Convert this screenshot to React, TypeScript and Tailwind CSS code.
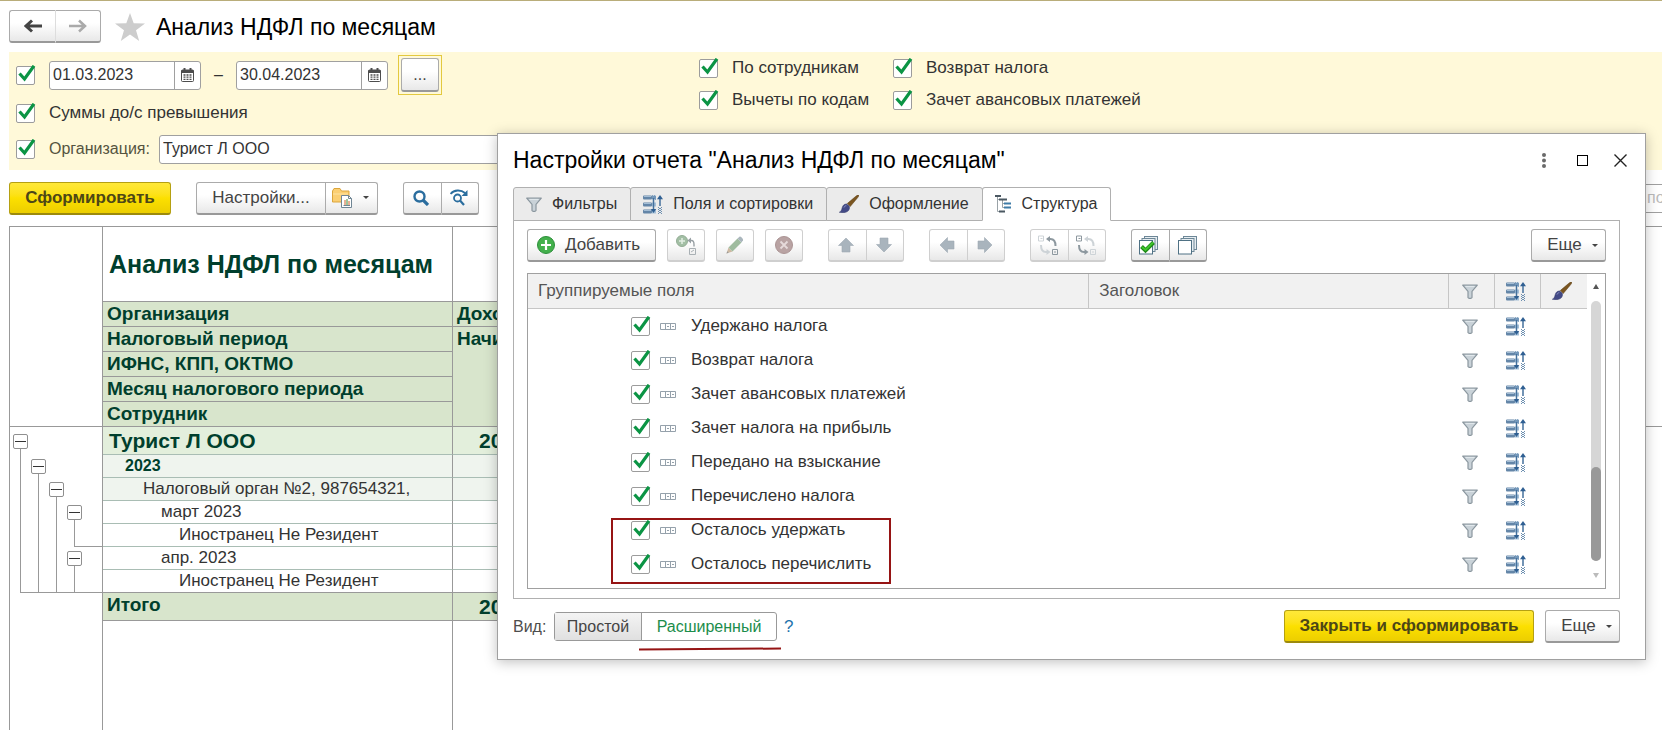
import { useState } from 'react';
import type { ReactNode } from 'react';
import clsx from 'clsx';

const FIELDS = [
  'Удержано налога',
  'Возврат налога',
  'Зачет авансовых платежей',
  'Зачет налога на прибыль',
  'Передано на взыскание',
  'Перечислено налога',
  'Осталось удержать',
  'Осталось перечислить',
];

const HEADERS = ['Налоговый период', 'ИФНС, КПП, ОКТМО', 'Месяц налогового периода', 'Сотрудник'];

interface ReportRow {
  text: string;
  level: number;
  closeFrom?: number;
  cell: string;
  value?: string;
}

const ROWS: ReportRow[] = [
  { text: 'Турист Л ООО', level: 0, cell: 'h-7 bg-[#e3efdc] pl-1.5 text-[21px] font-bold text-[#003f2d]', value: '20' },
  { text: '2023', level: 1, cell: 'h-[23px] bg-[#eff4ee] pl-[22px] text-base font-bold text-[#003f2d]' },
  { text: 'Налоговый орган №2, 987654321,', level: 2, cell: 'h-[23px] bg-[#eff4ee] pl-10 text-[17px] text-[#333]' },
  { text: 'март 2023', level: 3, cell: 'h-[23px] pl-[58px] text-[17px] text-[#333]' },
  { text: 'Иностранец Не Резидент', level: 4, closeFrom: 3, cell: 'h-[23px] pl-[76px] text-[17px] text-[#333]' },
  { text: 'апр. 2023', level: 3, cell: 'h-[23px] pl-[58px] text-[17px] text-[#333]' },
  { text: 'Иностранец Не Резидент', level: 4, closeFrom: 0, cell: 'h-[23px] pl-[76px] text-[17px] text-[#333]' },
];

function FunnelIcon() {
  return (
    <svg width="16" height="15" viewBox="0 0 16 15">
      <path d="M.7 1.2h14.6L10 7.4v6.2l-1 .8H7l-1-.8V7.4z" fill="#c9d2d8" stroke="#8b979f" strokeWidth="1.2" strokeLinejoin="round" />
      <path d="M3.5 2.4h9" stroke="#e4eaee" strokeWidth="1" />
    </svg>
  );
}

function SortIcon() {
  return (
    <svg width="20" height="19" viewBox="0 0 20 19">
      {[0, 7, 14].map(y => (
        <g key={y}>
          <rect x="0" y={y + 0.5} width="9" height="4" rx="1" fill="#6486a8" />
          <path d={`M1 ${y + 1.5}h7`} stroke="#a3bdd5" />
          <rect x="9" y={y + 0.5} width="4" height="4" fill="#a3bfd8" />
        </g>
      ))}
      <path d="M9 1h1M11 1h1M10 2h1M12 2h1M9 3h1M11 3h1M12 4h1" stroke="#44709c" />
      <path d="M10.5 3v12" stroke="#44709c" strokeWidth="1.5" />
      <path d="M7.8 14h5.4l-2.7 4z" fill="#2f5f92" />
      <path d="M17 3v8" stroke="#44709c" strokeWidth="1.5" />
      <path d="M14 4.3h6L17 0z" fill="#2f5f92" />
      <path d="M15.5 12v7M18.5 12v7" stroke="#6d8fb0" strokeDasharray="1 1" />
      <path d="M17 13v6" stroke="#6d8fb0" strokeWidth="2" strokeDasharray="1 1" />
    </svg>
  );
}

function BrushIcon() {
  return (
    <svg width="20" height="18" viewBox="0 0 20 18">
      <path d="M19.8.3c-1-.6-2 .3-3 1L8.2 8.6l3 3 7-8.4c.8-1 2-2.2 1.6-2.9z" fill="#7a5520" stroke="#5c3f14" strokeWidth=".5" />
      <path d="M7.6 9c-2.5-.2-4 1.6-4.5 4-.4 2.4-1.5 3.600-2.800 4.300 4 .9 9 .3 10-3.300.4-1.300.2-2.200-.2-2.900z" fill="#434a86" stroke="#2f3566" strokeWidth=".5" />
      <path d="M5 12.5c.5-1.300 1.300-1.800 2.300-1.800" stroke="#8f95c6" fill="none" />
    </svg>
  );
}

function StructureIcon() {
  return (
    <svg width="17" height="18" viewBox="0 0 17 18">
      <path d="M2.500 2v14.500h3M7.500 5v7.500h3M3 4.500h3M8 8.500h3" stroke="#9aa3a8" fill="none" />
      <path d="M0 1h6M4 4.500h8M4 16.500h6" stroke="#4b5862" strokeWidth="2" />
      <path d="M9 8.500h7M9 12.500h7" stroke="#3f7ca8" strokeWidth="2" />
    </svg>
  );
}

function CalendarIcon() {
  return (
    <svg width="13" height="14" viewBox="0 0 13 14">
      <path d="M1.500 2h10a1 1 0 0 1 1 1v9.500a1 1 0 0 1-1 1h-10a1 1 0 0 1-1-1V3a1 1 0 0 1 1-1z" fill="#fff" stroke="#4d4d4d" />
      <path d="M.5 2h12v3H.5z" fill="#4d4d4d" />
      <path d="M3.500 0v3M9.500 0v3" stroke="#4d4d4d" strokeWidth="2" />
      <path d="M2.500 7h2M5.500 7h2M8.500 7h2M2.500 9.200h2M5.500 9.200h2M8.500 9.200h2M2.500 11.400h2M5.500 11.400h2M8.500 11.400h2" stroke="#4d4d4d" strokeWidth="1.300" />
    </svg>
  );
}

function BlockArrow({ turn }: { turn: string }) {
  return (
    <svg width="16" height="16" viewBox="0 0 16 16" className={turn}>
      <path d="M8 1l7.500 7.500H12V15H4V8.500H.5z" fill="#a9b4bd" stroke="#9da9b3" strokeWidth=".6" />
    </svg>
  );
}

// direction "in" highlights the arrow to the upper square, "out" the lower one
function MoveIcon({ direction }: { direction: 'in' | 'out' }) {
  const strong = '#8d989f';
  const faint = '#cdd3d7';
  const top = direction === 'in' ? strong : faint;
  const bottom = direction === 'in' ? faint : strong;
  return (
    <svg width="20" height="20" viewBox="0 0 20 20" fill="none">
      <path d="M.5 1h5v5h-5zM2.500 3.500h2" stroke={bottom} />
      <path d="M14.500 14.500h5v5h-5zM16 17h2" stroke={top} />
      <path d="M10.500 4h2c3 0 5 2.500 5 7" stroke={top} strokeWidth="2" />
      <path d="M8 4l4-3v6z" fill={top} />
      <path d="M3 10c0 4 1.500 7 5 7h1" stroke={bottom} strokeWidth="2" />
      <path d="M12.500 17l-4-3v6z" fill={bottom} />
    </svg>
  );
}

function SheetsIcon({ checked }: { checked?: boolean }) {
  return (
    <svg width="19" height="19" viewBox="0 0 19 19" fill="none">
      <rect x="5.500" y=".5" width="13" height="13" fill="#e6edf1" stroke="#6d8797" />
      <rect x="3" y="2.500" width="13" height="13" fill="#e6edf1" stroke="#6d8797" />
      <rect x=".5" y="4.500" width="13" height="13.500" fill="#fff" stroke="#4f7184" />
      {checked && <path d="M2.500 10.500l4 4 8-8" stroke="#1d8a17" strokeWidth="4" />}
      {checked && <path d="M3 11l3.500 3 7.500-7.500" stroke="#3fc42c" strokeWidth="2" />}
    </svg>
  );
}

function Caret() {
  return (
    <svg width="6" height="3" viewBox="0 0 6 3">
      <path d="M0 0h6L3 3z" fill="#444" />
    </svg>
  );
}

function Checkbox({ id, label }: { id?: string; label?: string }) {
  const [checked, setChecked] = useState(true);
  return (
    <span className="relative block size-[19px] shrink-0">
      <input
        id={id}
        type="checkbox"
        aria-label={label}
        checked={checked}
        onChange={e => setChecked(e.target.checked)}
        className="block size-[19px] appearance-none rounded-[2px] border border-[#9c9c9c] bg-white"
      />
      {checked && (
        <svg width="21" height="19" viewBox="0 0 21 19" className="pointer-events-none absolute -top-px left-0">
          <path d="M3.500 8.500L8.500 14 18 .8" stroke="#0b9444" strokeWidth="3.200" fill="none" />
        </svg>
      )}
    </span>
  );
}

function CheckField({ id, children }: { id: string; children: ReactNode }) {
  return (
    <div className="flex items-center gap-3.5">
      <Checkbox id={id} />
      <label htmlFor={id} className="text-[17px] leading-5">{children}</label>
    </div>
  );
}

interface ButtonProps {
  children: ReactNode;
  label?: string;
  className?: string;
  disabled?: boolean;
}

function Button({ children, label, className, disabled }: ButtonProps) {
  return (
    <button
      aria-label={label}
      disabled={disabled}
      className={clsx(
        'flex h-[33px] items-center justify-center rounded-[3px] border border-b-2 bg-linear-to-b from-white from-40% to-[#e8e8e8] text-[#444]',
        disabled ? 'border-[#cfcfcf]' : 'border-[#ababab] border-b-[#999]',
        className
      )}
    >
      {children}
    </button>
  );
}

function ButtonGroup({ items, disabled }: { items: { label: string; icon: ReactNode }[]; disabled?: boolean }) {
  return (
    <div className="flex">
      {items.map((item, i) => (
        <Button
          key={item.label}
          label={item.label}
          disabled={disabled}
          className={i === 0 ? 'w-[39px] rounded-r-none pr-1' : 'w-[37px] rounded-l-none border-l-0 pr-0.5'}
        >
          {item.icon}
        </Button>
      ))}
    </div>
  );
}

function YellowButton({ children, className }: { children: ReactNode; className: string }) {
  return (
    <button
      className={clsx(
        'h-[33px] rounded-[3px] border border-b-2 border-[#b5a012] border-b-[#9c8a0c] bg-linear-to-b from-[#ffe838] via-[#fce000] to-[#ecce00] text-[17px] font-bold text-[#4d4717]',
        className
      )}
    >
      {children}
    </button>
  );
}

function DateField({ label, initial }: { label: string; initial: string }) {
  const [value, setValue] = useState(initial);
  return (
    <div className="flex h-[29px] w-[152px] rounded-[3px] border border-[#a0a0a0] bg-white">
      <input
        aria-label={label}
        value={value}
        onChange={e => setValue(e.target.value)}
        className="w-full min-w-0 flex-1 pl-[3px] text-[#333] outline-none"
      />
      <button aria-label="Выбрать дату" className="flex w-[26px] items-center justify-center border-l border-[#a0a0a0]">
        <CalendarIcon />
      </button>
    </div>
  );
}

function TreeCell({ row }: { row: ReportRow }) {
  const close = row.closeFrom ?? 9;
  return (
    <div className={clsx('flex w-[92px]', row.level === 0 ? 'h-7' : 'h-[23px]')}>
      <div className="w-2.5" />
      {[0, 1, 2, 3].map(level =>
        level === row.level ? (
          <div key={level} className="flex w-[18px] flex-col">
            <div className="flex-1" />
            <button
              aria-label="Свернуть"
              className="-ml-[7px] flex size-[15px] items-center justify-center rounded-[2px] border border-[#8f8f8f] bg-white"
            >
              <span className="h-px w-[11px] bg-[#333]" />
            </button>
            <div className="flex-1 border-l border-[#999]" />
          </div>
        ) : (
          <div
            key={level}
            className={clsx(
              'w-[18px] border-[#999]',
              level < row.level && 'border-l',
              level >= close && 'border-b'
            )}
          />
        )
      )}
      <div className={clsx('flex-1 border-[#999]', close < 9 && 'border-b')} />
    </div>
  );
}

function Report() {
  const head = 'border-r border-b border-[#999] bg-[#d8e5cc] py-0 pl-1 text-left align-top text-[19px] leading-6 font-bold text-[#003f2d]';
  return (
    <div className="ml-[9px] min-h-0 flex-1 overflow-hidden">
      <table className="h-full w-full table-fixed border-separate border-spacing-0 border-t border-l border-[#999]">
        <colgroup>
          <col className="w-[93px]" />
          <col className="w-[350px]" />
          <col className="w-[300px]" />
          <col />
        </colgroup>
        <thead>
          <tr className="h-[75px]">
            <td rowSpan={6} className="border-r border-b border-[#999]" />
            <th className="border-r border-b border-[#999] pl-1.5 text-left text-[25px] leading-8 font-bold text-[#003f2d]">
              Анализ НДФЛ по месяцам
            </th>
            <td className="border-b border-[#999]" />
            <td rowSpan={6} className="border-b border-[#999]" />
          </tr>
          <tr className="h-[25px]">
            <th className={head}>Организация</th>
            <th className={head}>Доходы</th>
          </tr>
          {HEADERS.map((text, i) => (
            <tr key={text} className="h-[25px]">
              <th className={head}>{text}</th>
              {i === 0 && <th rowSpan={4} className={head}>Начислено</th>}
            </tr>
          ))}
        </thead>
        <tbody>
          {ROWS.map((row, i) => {
            const last = i === ROWS.length - 1;
            const line = last ? 'border-b-[#999]' : 'border-b-[#a9bdb4]';
            return (
              <tr key={i}>
                <td className="border-r border-[#999] p-0"><TreeCell row={row} /></td>
                <td className={clsx('overflow-hidden border-r border-b border-r-[#999] py-0 leading-[22px] whitespace-nowrap', line, row.cell)}>
                  {row.text}
                </td>
                <td className={clsx('border-b py-0 leading-[22px]', line, row.cell)}>
                  {row.value && <span className="pl-5">{row.value}</span>}
                </td>
                <td />
              </tr>
            );
          })}
          <tr className="h-7">
            <td className="border-r border-[#999]" />
            <th className={head}>Итого</th>
            <td className="border-b border-[#999] bg-[#d8e5cc] py-0 pl-[26px] text-[21px] leading-[22px] font-bold text-[#003f2d]">20</td>
            <td />
          </tr>
          <tr>
            <td className="border-r border-[#999]" />
            <td className="border-r border-[#999]" />
            <td />
            <td />
          </tr>
        </tbody>
      </table>
    </div>
  );
}

const TABS = [
  { name: 'Фильтры', icon: <FunnelIcon /> },
  { name: 'Поля и сортировки', icon: <SortIcon /> },
  { name: 'Оформление', icon: <BrushIcon /> },
  { name: 'Структура', icon: <StructureIcon /> },
];

function StructureToolbar() {
  return (
    <div className="flex items-center">
      <Button className="w-[129px] gap-2.5 pr-1.5 text-[17px]">
        <svg width="18" height="18" viewBox="0 0 18 18">
          <circle cx="9" cy="9" r="8.500" fill="#43b04c" stroke="#2c8f3a" />
          <path d="M9 4v10M4 9h10" stroke="#fff" strokeWidth="2.200" />
        </svg>
        Добавить
      </Button>
      <div className="ml-[11px] flex gap-[11px]">
        <Button label="Добавить группировку" disabled className="w-[38px]">
          <svg width="20" height="20" viewBox="0 0 20 20" fill="none">
            <circle cx="6" cy="6" r="5.500" fill="#a3bfa5" stroke="#93ad95" />
            <path d="M6 3v6M3 6h6" stroke="#e4efe4" strokeWidth="1.500" />
            <path d="M13 5.500h2.500c1.500 0 2.500 1 2.500 4v2" stroke="#98a0a4" strokeWidth="1.400" />
            <path d="M11.500 5.500l3.500-3v6z" fill="#98a0a4" />
            <path d="M13.500 13.500h6v6h-6zM15 17l3-2" stroke="#a9b0b4" />
          </svg>
        </Button>
        <Button label="Изменить" disabled className="w-[38px]">
          <svg width="18" height="18" viewBox="0 0 18 18">
            <path d="M.5 17.500l2-6 4 4z" fill="#cdb9a2" />
            <path d="M2.500 11.500L11.500 2.500l4 4-9 9z" fill="#9fbc9f" />
            <path d="M11.500 2.500L13.500.7c1-.7 4 2.300 3.500 3.500l-1.500 2.300z" fill="#aab6bd" />
            <path d="M.5 17.500l.8-2.200 1.400 1.400z" fill="#999" />
          </svg>
        </Button>
        <Button label="Удалить" disabled className="w-[38px]">
          <svg width="18" height="18" viewBox="0 0 18 18">
            <circle cx="9" cy="9" r="8.500" fill="#b9a3a3" stroke="#ab9494" />
            <path d="M5.500 5.500l7 7M12.500 5.500l-7 7" stroke="#e6dada" strokeWidth="1.800" />
          </svg>
        </Button>
      </div>
      <div className="ml-[25px] flex gap-[25px]">
        <ButtonGroup disabled items={[
          { label: 'Вверх', icon: <BlockArrow turn="" /> },
          { label: 'Вниз', icon: <BlockArrow turn="rotate-180" /> },
        ]} />
        <ButtonGroup disabled items={[
          { label: 'Влево', icon: <BlockArrow turn="-rotate-90" /> },
          { label: 'Вправо', icon: <BlockArrow turn="rotate-90" /> },
        ]} />
        <ButtonGroup disabled items={[
          { label: 'Внутрь', icon: <MoveIcon direction="in" /> },
          { label: 'Наружу', icon: <MoveIcon direction="out" /> },
        ]} />
        <ButtonGroup items={[
          { label: 'Установить флажки', icon: <SheetsIcon checked /> },
          { label: 'Снять флажки', icon: <SheetsIcon /> },
        ]} />
      </div>
      <Button className="ml-auto w-[75px] gap-2.5 pl-2 text-[17px]">Еще<Caret /></Button>
    </div>
  );
}

function FieldsTable() {
  const head = 'border-r border-b border-[#c6c6c6] bg-[#f1f1f1] py-0 font-normal';
  const icon = 'flex justify-center pr-1';
  return (
    <div className="relative mt-[11px] flex h-[316px] border border-[#a0a0a0]">
      <div className="flex-1">
        <table className="w-full table-fixed border-separate border-spacing-0">
          <colgroup>
            <col className="w-[53%]" />
            <col />
            <col className="w-[46px]" />
            <col className="w-[46px]" />
            <col className="w-[46px]" />
          </colgroup>
          <thead>
            <tr className="h-[35px] text-[17px] text-[#555]">
              <th className={clsx(head, 'pl-2.5 text-left')}>Группируемые поля</th>
              <th className={clsx(head, 'pl-2.5 text-left')}>Заголовок</th>
              <th className={head}><span className={icon}><FunnelIcon /></span></th>
              <th className={head}><span className={icon}><SortIcon /></span></th>
              <th className="border-b border-[#c6c6c6] bg-[#f1f1f1] py-0"><span className={icon}><BrushIcon /></span></th>
            </tr>
          </thead>
          <tbody>
            {FIELDS.map((field, i) => (
              <tr key={field} className="h-[34px]">
                <td className="py-0 pl-[103px]">
                  <div className="flex items-center">
                    <Checkbox id={`field-${i}`} />
                    <svg width="16" height="7" viewBox="0 0 16 7" fill="none" className="ml-2.5">
                      <path d="M.5.5h15v6H.5zM5.500.5v6M10.500.5v6M7 3.500h2M12 3.500h2" stroke="#95a1ab" />
                    </svg>
                    <label htmlFor={`field-${i}`} className="ml-[15px] text-[17px] text-[#333]">{field}</label>
                  </div>
                </td>
                <td />
                <td className="p-0"><span className={icon}><FunnelIcon /></span></td>
                <td className="p-0"><span className={icon}><SortIcon /></span></td>
                <td />
              </tr>
            ))}
          </tbody>
        </table>
      </div>
      <div className="flex w-[18px] flex-col items-center py-2.5">
        <svg width="6" height="5" viewBox="0 0 6 5"><path d="M0 5h6L3 0z" fill="#555" /></svg>
        <div className="mt-3 flex w-2.5 flex-1 flex-col justify-end rounded-full bg-[#d6d6d6]">
          <div className="h-[94px] rounded-full bg-[#999]" />
        </div>
        <svg width="6" height="5" viewBox="0 0 6 5" className="mt-3"><path d="M0 0h6L3 5z" fill="#bbb" /></svg>
      </div>
      <div className="pointer-events-none absolute bottom-1 left-[83px] h-[66px] w-[280px] border-2 border-[#961414]" />
    </div>
  );
}

function SettingsDialog() {
  const [tab, setTab] = useState('Структура');
  return (
    <div
      role="dialog"
      aria-labelledby="dialog-title"
      className="absolute top-[132px] right-4 left-[497px] border border-[#a0a0a0] bg-white pr-[25px] pb-4 pl-[15px] shadow-[0_2px_12px_rgba(0,0,0,0.25)]"
    >
      <div className="flex h-[53px] items-center">
        <h2 id="dialog-title" className="flex-1 text-[23px] text-black">Настройки отчета "Анализ НДФЛ по месяцам"</h2>
        <button aria-label="Меню" className="mr-[31px]">
          <svg width="4" height="15" viewBox="0 0 4 15" fill="#6a6a6a">
            <circle cx="2" cy="2" r="2" />
            <circle cx="2" cy="7.500" r="2" />
            <circle cx="2" cy="13" r="2" />
          </svg>
        </button>
        <button aria-label="Развернуть" className="mr-[26px] size-[11px] border border-black" />
        <button aria-label="Закрыть" className="-mr-[7px]">
          <svg width="13" height="13" viewBox="0 0 13 13"><path d="M.5.5l12 12M12.500.5l-12 12" stroke="#222" strokeWidth="1.400" /></svg>
        </button>
      </div>

      <div role="tablist" className="relative flex">
        {TABS.map(({ name, icon }, i) => (
          <button
            key={name}
            role="tab"
            aria-selected={tab === name}
            onClick={() => setTab(name)}
            className={clsx(
              '-mb-px flex h-[34px] items-center gap-2.5 rounded-t-[3px] border border-[#b0b0b0] pr-[13px] pl-3 text-[#333]',
              i > 0 && '-ml-px',
              tab === name ? 'border-b-white bg-white' : 'bg-[#ebebeb]'
            )}
          >
            {icon}
            {name}
          </button>
        ))}
      </div>
      <div className="border border-[#b0b0b0] px-[13px] pt-2 pb-[9px]">
        <StructureToolbar />
        <FieldsTable />
      </div>

      <div className="mt-[11px] flex items-center">
        <span className="w-[41px] text-[#4d4d4d]">Вид:</span>
        <div className="relative flex h-[29px] rounded-[3px] border border-[#999]">
          <button className="w-[87px] border-r border-[#999] bg-linear-to-b from-[#f4f4f4] to-[#e0e0e0] text-[#444]">Простой</button>
          <button className="w-[134px] text-[#1c8d4b]">Расширенный</button>
          <svg width="142" height="4" viewBox="0 0 142 4" className="pointer-events-none absolute top-[34px] left-[84px]">
            <path d="M0 2.500L142 1.500" stroke="#961414" strokeWidth="2" />
          </svg>
        </div>
        <a href="#help" className="ml-[7px] text-[17px] text-[#1f74ad]">?</a>
        <YellowButton className="ml-auto w-[250px]">Закрыть и сформировать</YellowButton>
        <Button className="ml-[11px] w-[75px] gap-2.5 pl-2 text-[17px]">Еще<Caret /></Button>
      </div>
    </div>
  );
}

export default function App() {
  const [company, setCompany] = useState('Турист Л ООО');

  return (
    <div className="relative flex h-screen flex-col overflow-hidden border-t border-[#b9ad7a] bg-white font-['Liberation_Sans',Arial,sans-serif] text-base text-[#333]">
      <header className="flex h-[51px] items-center pl-[9px]">
        <div className="flex">
          <Button label="Назад" className="h-[31px] w-[47px] rounded-r-none border-r-[#ddd]">
            <svg width="18" height="14" viewBox="0 0 18 14"><path d="M18 7H4M8 1.500L2 7l6 5.500" stroke="#444" strokeWidth="3" fill="none" /></svg>
          </Button>
          <Button label="Вперед" className="h-[31px] w-[45px] rounded-l-none border-l-0">
            <svg width="18" height="14" viewBox="0 0 18 14"><path d="M0 7h14M10 1.500L16 7l-6 5.500" stroke="#aaa" strokeWidth="2.500" fill="none" /></svg>
          </Button>
        </div>
        <button aria-label="В избранное" className="ml-3.5">
          <svg width="30" height="28" viewBox="0 0 30 28">
            <path d="M15 0l3.700 10.300L30 10.500l-9 6.700L24.200 28 15 21.500 5.800 28 9 17.200l-9-6.700 11.300-.2z" fill="#cdcdcd" />
          </svg>
        </button>
        <h1 className="ml-[11px] text-[23px] leading-8 text-black">Анализ НДФЛ по месяцам</h1>
      </header>

      <section className="ml-[9px] flex h-[118px] bg-[#fff9d9] pl-[7px]">
        <div className="flex w-[683px] flex-col">
          <div className="flex h-[46px] items-center">
            <Checkbox label="Период" />
            <div className="ml-3.5 flex items-center">
              <DateField label="Начало периода" initial="01.03.2023" />
              <span className="w-[35px] text-center">–</span>
              <DateField label="Конец периода" initial="30.04.2023" />
            </div>
            <div className="ml-2.5 border border-[#e3c93f] p-0.5">
              <Button className="h-[34px] w-[38px]">...</Button>
            </div>
          </div>
          <div className="flex h-[30px] items-center">
            <CheckField id="sums">Суммы до/с превышения</CheckField>
          </div>
          <div className="flex h-[42px] items-center">
            <Checkbox id="company-on" label="Отбор по организации" />
            <label htmlFor="company" className="ml-3.5 w-[110px] text-[#55543f]">Организация:</label>
            <input
              id="company"
              value={company}
              onChange={e => setCompany(e.target.value)}
              className="h-[29px] flex-1 rounded-[3px] border border-[#a0a0a0] bg-white pl-[3px]"
            />
          </div>
        </div>
        <div className="grid h-16 grid-cols-[194px_auto] content-start">
          <div className="flex h-8 items-center"><CheckField id="staff">По сотрудникам</CheckField></div>
          <div className="flex h-8 items-center"><CheckField id="refund">Возврат налога</CheckField></div>
          <div className="flex h-8 items-center"><CheckField id="codes">Вычеты по кодам</CheckField></div>
          <div className="flex h-8 items-center"><CheckField id="advance">Зачет авансовых платежей</CheckField></div>
        </div>
      </section>

      <div className="flex h-14 items-center pl-[9px]">
        <YellowButton className="w-[162px]">Сформировать</YellowButton>
        <div className="ml-[25px] flex">
          <Button className="w-[130px] rounded-r-none text-[17px]">Настройки...</Button>
          <Button label="Варианты отчета" className="w-[52px] gap-2.5 rounded-l-none border-l-0 pr-0.5">
            <svg width="21" height="20" viewBox="0 0 21 20">
              <path d="M.5 14V3l1.500-2.500h6L9.500 3H17v11z" fill="#fbcf73" stroke="#dba53c" />
              <path d="M1 6h15" stroke="#fde3a5" />
              <path d="M9.500 7.500h7l3 3v9h-10z" fill="#fff" stroke="#6f8594" />
              <path d="M16.500 7.500v3h3M11.500 17.500h6.500" stroke="#6f8594" fill="none" />
              <path d="M13 12v5" stroke="#d2622a" />
              <path d="M15 11v6" stroke="#3b8b3b" />
              <path d="M17 13v4" stroke="#d2622a" />
            </svg>
            <Caret />
          </Button>
        </div>
        <div className="ml-[25px]">
          <ButtonGroup items={[
            {
              label: 'Найти',
              icon: (
                <svg width="16" height="16" viewBox="0 0 16 16" fill="none" stroke="#2a6d9e">
                  <circle cx="6.500" cy="6.500" r="5" strokeWidth="2.400" />
                  <path d="M10 10l5 5" strokeWidth="3.200" />
                </svg>
              ),
            },
            {
              label: 'Найти далее',
              icon: (
                <svg width="18" height="17" viewBox="0 0 18 17" fill="none" stroke="#2a6d9e">
                  <circle cx="7.500" cy="9" r="3.500" strokeWidth="1.800" />
                  <path d="M10 11.500l4 4.500" strokeWidth="2.200" />
                  <path d="M.5 5C4 .5 11 .5 15 4" strokeWidth="1.800" />
                  <path d="M17.500 1v6h-6z" fill="#2a6d9e" stroke="none" />
                </svg>
              ),
            },
          ]} />
        </div>
        <input
          aria-label="Поиск"
          placeholder="по"
          className="ml-auto h-[29px] w-10 border-y border-[#a0a0a0] pl-[25px] placeholder:text-[#bbb]"
        />
      </div>

      <Report />
      <SettingsDialog />
    </div>
  );
}
